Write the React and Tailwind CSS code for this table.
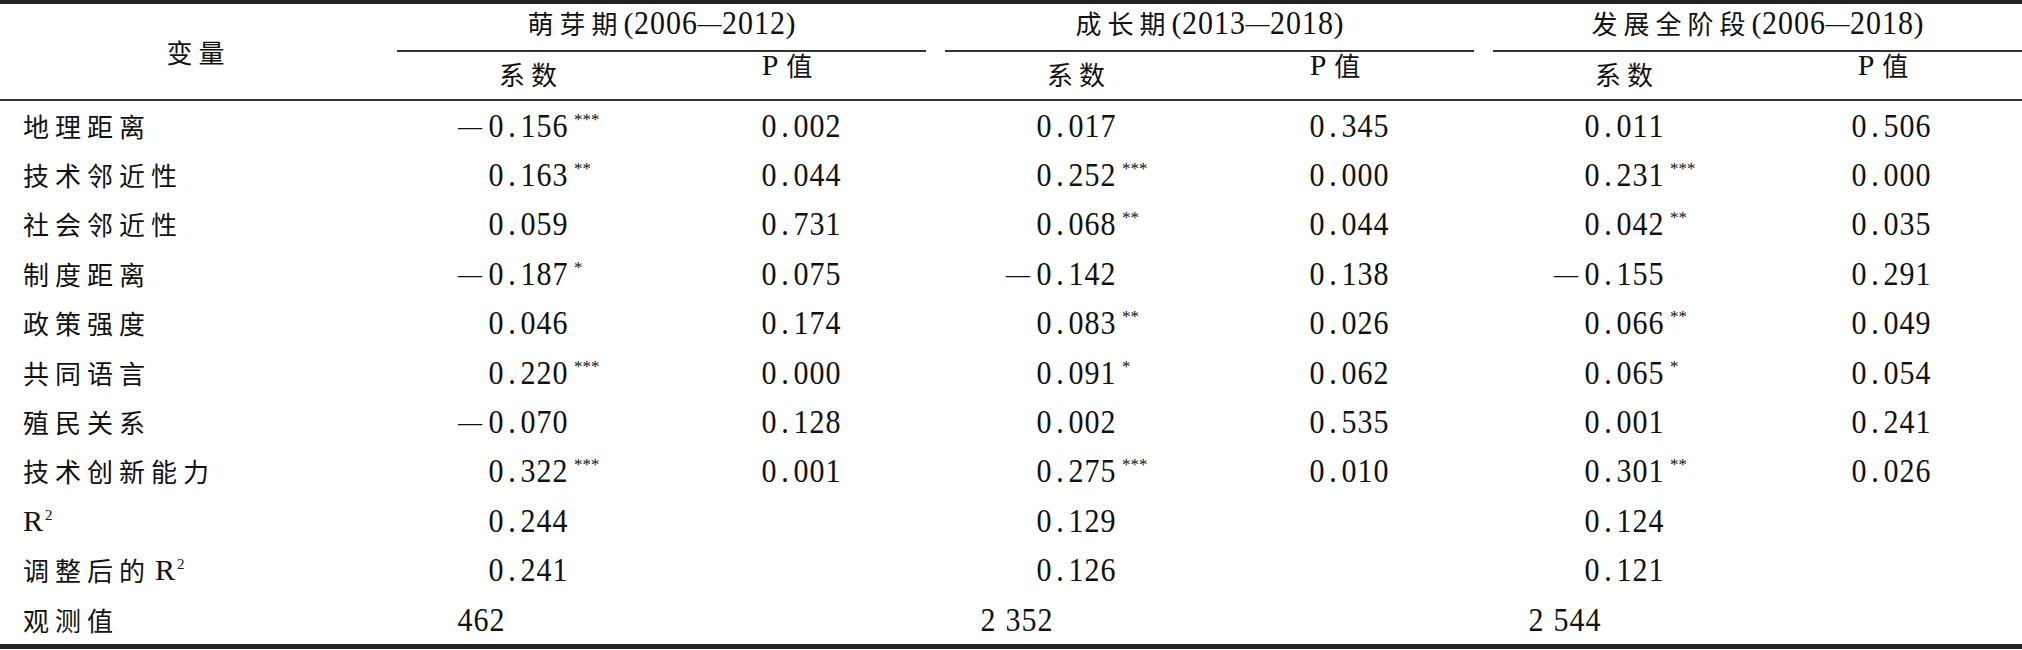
import React from 'react'

const GROUPS = [
  { name: '萌芽期', years: ['2006', '2012'], pw: 364 },
  { name: '成长期', years: ['2013', '2018'], pw: 364 },
  { name: '发展全阶段', years: ['2006', '2018'], pw: 358 },
]

const ROWS = [
  { label: '地理距离', cells: [['-0.156', '***', '0.002'], ['0.017', '', '0.345'], ['0.011', '', '0.506']] },
  { label: '技术邻近性', cells: [['0.163', '**', '0.044'], ['0.252', '***', '0.000'], ['0.231', '***', '0.000']] },
  { label: '社会邻近性', cells: [['0.059', '', '0.731'], ['0.068', '**', '0.044'], ['0.042', '**', '0.035']] },
  { label: '制度距离', cells: [['-0.187', '*', '0.075'], ['-0.142', '', '0.138'], ['-0.155', '', '0.291']] },
  { label: '政策强度', cells: [['0.046', '', '0.174'], ['0.083', '**', '0.026'], ['0.066', '**', '0.049']] },
  { label: '共同语言', cells: [['0.220', '***', '0.000'], ['0.091', '*', '0.062'], ['0.065', '*', '0.054']] },
  { label: '殖民关系', cells: [['-0.070', '', '0.128'], ['0.002', '', '0.535'], ['0.001', '', '0.241']] },
  { label: '技术创新能力', cells: [['0.322', '***', '0.001'], ['0.275', '***', '0.010'], ['0.301', '**', '0.026']] },
  { label: 'R2', cells: [['0.244', '', ''], ['0.129', '', ''], ['0.124', '', '']] },
  { label: '调整后的 R2', cells: [['0.241', '', ''], ['0.126', '', ''], ['0.121', '', '']] },
]

const OBS = ['462', '2 352', '2 544']

const cjk = "font-['Noto_Sans_CJK_SC',sans-serif] text-[26px] tracking-[6px] leading-none"
const serif = "font-['Liberation_Serif',serif] leading-none"

// digits sit on a fixed grid, like the half-width figures of the source font
function Num({ text }) {
  return (
    <span className={serif + ' inline-flex scale-y-[1.1] text-[30px]'}>
      {[...text].map((c, i) => (
        <span key={i} className={c === ' ' ? 'w-[9px]' : 'w-[16px] text-center'}>
          {c}
        </span>
      ))}
    </span>
  )
}

function Label({ text }) {
  if (text.endsWith('R2')) {
    const head = text.slice(0, -2).trim()
    return (
      <div className="flex w-[397px] items-center pl-[23px]">
        {head && <span className={cjk + ' mr-[4px]'}>{head}</span>}
        <span className={serif + ' text-[30px]'}>
          R<sup className="-top-[0.75em] ml-[2px] text-[15px]">2</sup>
        </span>
      </div>
    )
  }
  return (
    <div className="flex w-[397px] items-center pl-[23px]">
      <span className={cjk}>{text}</span>
    </div>
  )
}

function Cell({ coef, stars, p, pw }) {
  const neg = coef.startsWith('-')
  return (
    <div className="flex w-[529px] items-center">
      <div className="flex items-center pl-[61px]" style={{ width: pw }}>
        <span className={serif + ' w-[30px] text-[24px]'}>{neg ? '—' : ''}</span>
        <span className="flex items-start">
          <Num text={neg ? coef.slice(1) : coef} />
          {stars && <span className={serif + ' ml-[6px] text-[17px]'}>{stars}</span>}
        </span>
      </div>
      {p && <Num text={p} />}
    </div>
  )
}

function GroupTitle({ g }) {
  return (
    <div className="flex w-[529px] items-center justify-center pb-[8px]">
      <span className={cjk}>{g.name}</span>
      <span className={serif + ' text-[30px]'}>(</span>
      <Num text={g.years[0]} />
      <span className={serif + ' text-[24px]'}>—</span>
      <Num text={g.years[1]} />
      <span className={serif + ' text-[30px]'}>)</span>
    </div>
  )
}

function SubHead() {
  return (
    <div className="flex w-[529px] items-center">
      <div className="flex w-[268px] items-center justify-center pb-[3px]">
        <span className={cjk}>系数</span>
      </div>
      <div className="-mt-[2px] flex w-[250px] items-center justify-center self-start">
        <span className={serif + ' mr-[8px] text-[30px]'}>P</span>
        <span className={cjk}>值</span>
      </div>
    </div>
  )
}

export default function App() {
  return (
    <div className="h-[650px] w-[2022px] overflow-hidden bg-white text-[#111]">
      <div className="h-[4px] bg-[#222]" />

      <div className="flex">
        <div className="flex w-[397px] items-center justify-center">
          <span className={cjk}>变量</span>
        </div>
        <div className="flex flex-col">
          <div className="flex h-[46px] gap-[19px]">
            {GROUPS.map((g) => (
              <GroupTitle key={g.name} g={g} />
            ))}
          </div>
          <div className="flex gap-[19px]">
            {GROUPS.map((g) => (
              <div key={g.name} className="h-[2px] w-[529px] bg-[#333]" />
            ))}
          </div>
          <div className="flex h-[47px] gap-[19px]">
            {GROUPS.map((g) => (
              <SubHead key={g.name} />
            ))}
          </div>
        </div>
      </div>
      <div className="h-[2px] bg-[#333]" />

      {ROWS.map((r) => (
        <div key={r.label} className="flex h-[49.4px]">
          <Label text={r.label} />
          <div className="flex gap-[19px]">
            {r.cells.map((c, i) => (
              <Cell key={i} coef={c[0]} stars={c[1]} p={c[2]} pw={GROUPS[i].pw} />
            ))}
          </div>
        </div>
      ))}

      <div className="flex h-[49.4px]">
        <Label text="观测值" />
        <div className="flex gap-[19px]">
          {OBS.map((o) => (
            <div key={o} className="flex w-[529px] items-center">
              <div className="flex w-[108px] justify-end">
                <Num text={o} />
              </div>
            </div>
          ))}
        </div>
      </div>

      <div className="h-[5px] bg-[#222]" />
    </div>
  )
}
